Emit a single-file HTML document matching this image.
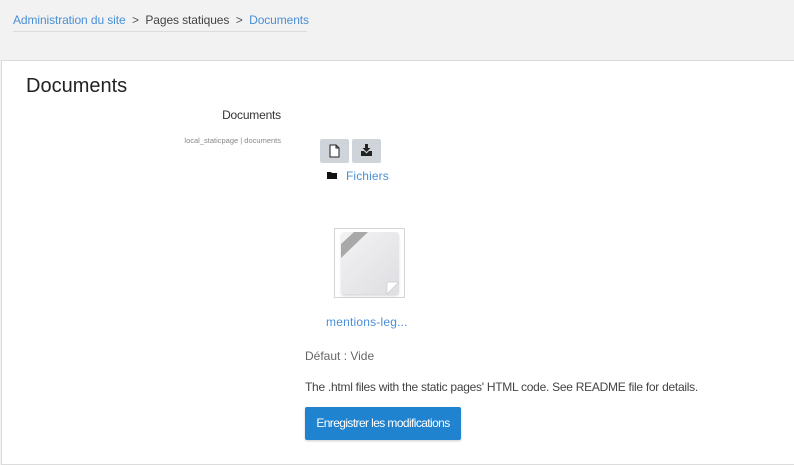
<!DOCTYPE html>
<html><head><meta charset="utf-8"><style>
*{margin:0;padding:0;box-sizing:border-box}
body{width:794px;height:465px;background:#f2f2f2;font-family:"Liberation Sans",sans-serif;position:relative;overflow:hidden;color:#333}
.a{position:absolute;white-space:nowrap}
.link{color:#4a8fd6}
#panel{position:absolute;left:1px;top:60px;width:800px;height:405px;background:#fff;border:1px solid #dcdcdc}
.btn{position:absolute;top:139px;width:29px;height:24px;background:#ced4da;border-radius:2px}
</style></head><body>
<div class="a" style="left:13px;top:12px;font-size:12px;line-height:16px;letter-spacing:-.1px"><span class="link">Administration du site</span><span style="color:#555">&nbsp; &gt; &nbsp;</span><span style="color:#444">Pages statiques</span><span style="color:#555">&nbsp; &gt; &nbsp;</span><span class="link">Documents</span></div>
<div class="a" style="left:13px;top:31px;width:294px;height:1px;background:#dcdcdc"></div>
<div id="panel"></div>
<div class="a" style="left:26px;top:75px;font-size:20px;color:#222">Documents</div>
<div class="a" style="right:513px;top:108px;font-size:12px;color:#333;letter-spacing:-.2px">Documents</div>
<div class="a" style="right:513px;top:136px;font-size:7.5px;color:#888">local_staticpage | documents</div>
<div class="btn" style="left:320px"><svg width="29" height="24" viewBox="0 0 29 24"><path d="M10 6h6l3 3v9h-9z M16 6v3h3" fill="#fff" stroke="#222" stroke-width="1"/></svg></div>
<div class="btn" style="left:352px"><svg width="29" height="24" viewBox="0 0 29 24"><path d="M13 5h3v4h2.5l-4 4-4-4h2.5z" fill="#222"/><path d="M9 12h3l2.5 2.5 2.5-2.5h3v5h-11z" fill="#222"/></svg></div>
<svg class="a" style="left:327px;top:171px" width="10" height="8" viewBox="0 0 10 8"><path d="M0 1h4l1 1h5v6h-10z" fill="#111"/></svg>
<div class="a link" style="left:346px;top:169px;font-size:12px;letter-spacing:.1px">Fichiers</div>
<div class="a" style="left:334px;top:228px;width:71px;height:70px;border:1px solid #d5d5d5;background:#fff"></div>
<div class="a" style="left:341px;top:232px;width:58px;height:62px;background:linear-gradient(135deg,#f3f3f5,#dedee2);border-radius:3px;box-shadow:0 2px 2px rgba(0,0,0,.15)"></div>
<svg class="a" style="left:341px;top:232px" width="58" height="62" viewBox="0 0 58 62"><path d="M0 12L13 0h14L0 26z" fill="#a9a9a9"/><path d="M58 50L46 62V52q0-2 2-2z" fill="#fff" stroke="#ccc" stroke-width=".7"/></svg>
<div class="a link" style="left:326px;top:315px;font-size:12px;letter-spacing:.2px">mentions-leg...</div>
<div class="a" style="left:305px;top:349px;font-size:12px;color:#666">Défaut : Vide</div>
<div class="a" style="left:305px;top:380px;font-size:12px;color:#444;letter-spacing:-.27px">The .html files with the static pages' HTML code. See README file for details.</div>
<div class="a" style="left:305px;top:407px;width:156px;height:33px;background:#2083d0;border-radius:2px;color:#fff;font-size:12px;line-height:33px;text-align:center;box-shadow:0 1px 2px rgba(0,0,0,.2);letter-spacing:-.6px">Enregistrer les modifications</div>
</body></html>
